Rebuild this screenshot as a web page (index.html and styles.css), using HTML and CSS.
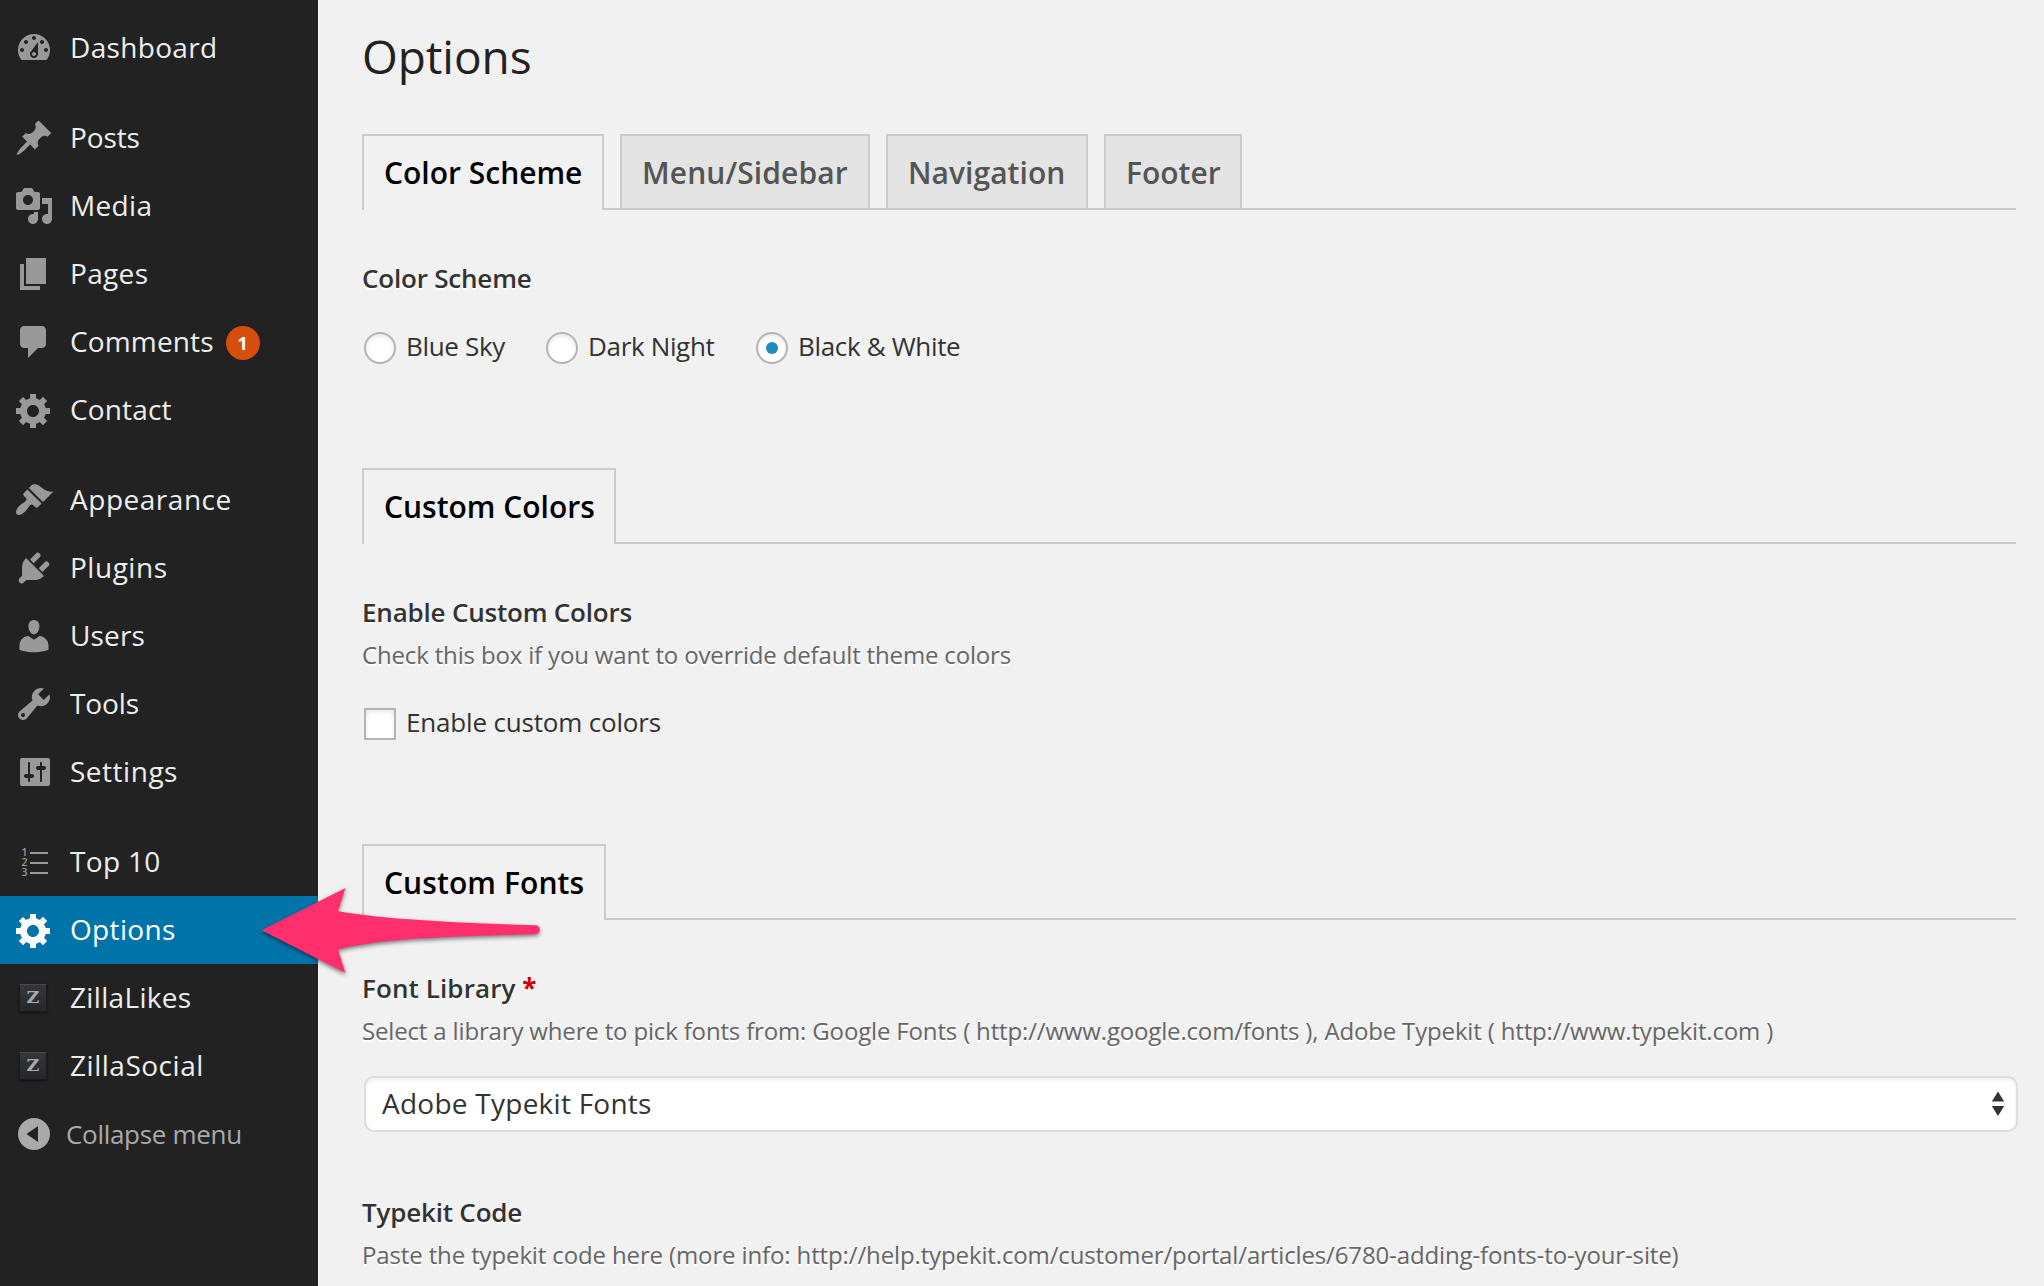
FILE: index.html
```
<!DOCTYPE html>
<html lang="en">
<head>
<meta charset="utf-8">
<title>Options</title>
<link rel="stylesheet" href="styles.css">
</head>
<body>
<div class="admin">
  <nav class="menu">
    <a class="item"><svg class="icon" viewBox="0 0 20 20"><path d="M3.76 16h12.48c1.1-1.37 1.76-3.11 1.76-5 0-4.42-3.58-8-8-8s-8 3.58-8 8c0 1.89.66 3.63 1.76 5zM10 4c.55 0 1 .45 1 1s-.45 1-1 1-1-.45-1-1 .45-1 1-1zM6 6c.55 0 1 .45 1 1s-.45 1-1 1-1-.45-1-1 .45-1 1-1zm8 0c.55 0 1 .45 1 1s-.45 1-1 1-1-.45-1-1 .45-1 1-1zm-5.37 5.55L12 7v6c0 1.1-.9 2-2 2s-2-.9-2-2c0-.57.24-1.08.63-1.45zM4 10c.55 0 1 .45 1 1s-.45 1-1 1-1-.45-1-1 .45-1 1-1zm12 0c.55 0 1 .45 1 1s-.45 1-1 1-1-.45-1-1 .45-1 1-1zm-5 3c0-.55-.45-1-1-1s-1 .45-1 1 .45 1 1 1 1-.45 1-1z"/></svg><span class="name">Dashboard</span></a>
    <div class="separator"></div>
    <a class="item tight"><svg class="icon" viewBox="0 0 20 20"><path d="M10.44 3.02l1.82-1.82 6.36 6.35-1.83 1.82c-1.05-.68-2.48-.57-3.41.36l-.75.75c-.92.93-1.04 2.35-.35 3.41l-1.83 1.82-2.41-2.41-2.8 2.79c-.42.42-3.38 2.71-3.8 2.29s1.86-3.39 2.28-3.81l2.79-2.79L4.1 9.36l1.83-1.82c1.05.69 2.48.57 3.4-.36l.75-.75c.93-.92 1.05-2.35.36-3.41z"/></svg><span class="name">Posts</span></a>
    <a class="item"><svg class="icon" viewBox="0 0 20 20"><path d="M13 11V4c0-.55-.45-1-1-1h-1.67L9 1H5L3.67 3H2c-.55 0-1 .45-1 1v7c0 .55.45 1 1 1h10c.55 0 1-.45 1-1zM7 4.5c1.38 0 2.5 1.12 2.5 2.5S8.38 9.5 7 9.5 4.5 8.38 4.5 7 5.62 4.5 7 4.5zM14 6h5v10.5c0 1.38-1.12 2.5-2.5 2.5S14 17.88 14 16.5s1.12-2.5 2.5-2.5c.17 0 .34.02.5.05V9h-3V6zm-4 8.05V13h2v3.5c0 1.38-1.12 2.5-2.5 2.5S7 17.88 7 16.5 8.12 14 9.5 14c.17 0 .34.02.5.05z"/></svg><span class="name">Media</span></a>
    <a class="item"><svg class="icon" viewBox="0 0 20 20"><path d="M6 15V2h10v13H6zm-1 1h8v2H3V5h2v11z"/></svg><span class="name">Pages</span></a>
    <a class="item snug"><svg class="icon" viewBox="0 0 20 20"><path d="M5 2h9c1.1 0 2 .9 2 2v7c0 1.1-.9 2-2 2h-2l-5 5v-5H5c-1.1 0-2-.9-2-2V4c0-1.1.9-2 2-2z"/></svg><span class="name">Comments</span><span class="count">1</span></a>
    <a class="item snug"><svg class="icon" viewBox="0 0 20 20"><path id="gear" d="M18 12h-2.18c-.17.7-.44 1.35-.81 1.93l1.54 1.54-2.1 2.1-1.54-1.54c-.58.36-1.23.63-1.91.79V19H8v-2.18c-.68-.16-1.33-.43-1.91-.79l-1.54 1.54-2.12-2.12 1.54-1.54c-.36-.58-.63-1.23-.79-1.91H1V9.03h2.17c.16-.7.44-1.35.8-1.94L2.43 5.55l2.1-2.1 1.54 1.54c.58-.37 1.24-.64 1.93-.81V2h3v2.18c.68.16 1.33.43 1.91.79l1.54-1.54 2.12 2.12-1.54 1.54c.36.59.64 1.24.8 1.94H18V12zm-8.5 1.5c1.66 0 3-1.34 3-3s-1.34-3-3-3-3 1.34-3 3 1.34 3 3 3z"/></svg><span class="name">Contact</span></a>
    <div class="separator"></div>
    <a class="item wide"><svg class="icon" viewBox="0 0 20 20"><path d="M14.48 11.06L7.41 3.99l1.5-1.5c.5-.56 2.3-.47 3.51.32 1.21.8 1.43 1.28 2.91 2.1 1.18.64 2.45 1.26 4.45.85zm-.71.71L6.7 4.7 4.93 6.47c-.39.39-.39 1.02 0 1.41l1.06 1.06c.39.39.39 1.03 0 1.42-.6.6-1.43 1.11-2.21 1.69-.35.26-.7.53-1.01.84C1.43 14.23.4 16.08 1.4 17.07c.99 1 2.84-.03 4.18-1.36.31-.31.58-.66.85-1.02.57-.78 1.08-1.61 1.69-2.21.39-.39 1.02-.39 1.41 0l1.06 1.06c.39.39 1.02.39 1.41 0z"/></svg><span class="name">Appearance</span></a>
    <a class="item wide"><svg class="icon" viewBox="0 0 20 20"><path d="M13.11 4.36L9.87 7.6 8 5.73l3.24-3.24c.35-.34 1.05-.2 1.56.32.52.51.66 1.21.31 1.55zm-8 1.77l.91-1.12 9.01 9.01-1.19.84c-.71.71-2.63 1.16-3.82 1.16H6.14L4.9 17.26c-.59.59-1.54.59-2.12 0-.59-.58-.59-1.53 0-2.12l1.24-1.24v-3.88c0-1.13.4-3.19 1.09-3.89zm7.26 3.97l3.24-3.24c.34-.35 1.04-.21 1.55.31.52.51.66 1.21.31 1.55l-3.24 3.25z"/></svg><span class="name">Plugins</span></a>
    <a class="item snug"><svg class="icon" viewBox="0 0 20 20"><path d="M10 9.25c-2.27 0-2.73-3.44-2.73-3.44C7 4.02 7.82 2 9.97 2c2.16 0 2.98 2.02 2.71 3.81 0 0-.41 3.44-2.68 3.44zm0 2.57L12.72 10c2.39 0 4.52 2.33 4.52 4.53v2.49s-3.65 1.13-7.24 1.13c-3.65 0-7.24-1.13-7.24-1.13v-2.49c0-2.25 1.94-4.48 4.47-4.48z"/></svg><span class="name">Users</span></a>
    <a class="item tight"><svg class="icon" viewBox="0 0 20 20"><path d="M16.68 9.77c-1.34 1.34-3.3 1.67-4.95.99l-5.41 6.52c-.99.99-2.59.99-3.58 0s-.99-2.59 0-3.57l6.52-5.42c-.68-1.65-.35-3.61.99-4.95 1.28-1.28 3.12-1.62 4.72-1.06l-2.89 2.89 2.82 2.82 2.86-2.87c.53 1.58.18 3.39-1.08 4.65zM3.81 16.21c.4.39 1.04.39 1.43 0 .4-.4.4-1.04 0-1.43-.39-.4-1.03-.4-1.43 0-.39.39-.39 1.03 0 1.43z"/></svg><span class="name">Tools</span></a>
    <a class="item wide"><svg class="icon" viewBox="0 0 20 20"><path d="M18 16V4c0-.55-.45-1-1-1H4c-.55 0-1 .45-1 1v12c0 .55.45 1 1 1h13c.55 0 1-.45 1-1zM8 11h1c.55 0 1 .45 1 1s-.45 1-1 1H8v1.5c0 .28-.22.5-.5.5s-.5-.22-.5-.5V13H6c-.55 0-1-.45-1-1s.45-1 1-1h1V5.5c0-.28.22-.5.5-.5s.5.22.5.5V11zm5-2h-1c-.55 0-1-.45-1-1s.45-1 1-1h1V5.500c0-.28.22-.5.5-.5s.5.22.5.5V7h1c.55 0 1 .45 1 1s-.45 1-1 1h-1v5.500c0 .28-.22.5-.5.5s-.5-.22-.5-.5V9z"/></svg><span class="name">Settings</span></a>
    <div class="separator"></div>
    <a class="item"><svg class="icon" viewBox="0 0 40 40"><path d="M16 10h18v2H16zM16 20h18v2H16zM16 30h18v2H16z"/><text class="digit" x="7.500" y="14">1</text><text class="digit" x="7.500" y="24">2</text><text class="digit" x="7.500" y="34">3</text></svg><span class="name">Top 10</span></a>
    <a class="item current"><svg class="icon" viewBox="0 0 20 20"><use href="#gear"/></svg><span class="name">Options</span></a>
    <a class="item"><span class="zilla">Z</span><span class="name">ZillaLikes</span></a>
    <a class="item wide"><span class="zilla">Z</span><span class="name">ZillaSocial</span></a>
    <a class="item collapse"><svg class="icon" viewBox="0 0 40 40"><path fill-rule="evenodd" d="M20 4a16 16 0 1 0 0 32 16 16 0 0 0 0-32zM24 12v16L12.500 20z"/></svg><span class="name">Collapse menu</span></a>
  </nav>

  <main class="content">
    <h1 class="title">Options</h1>

    <section class="group">
      <div class="tabs"><a class="tab active scheme">Color Scheme</a><a class="tab sidebar">Menu/Sidebar</a><a class="tab navigation">Navigation</a><a class="tab footer">Footer</a></div>
      <h4 class="label">Color Scheme</h4>
      <div class="radios">
        <label class="choice blue"><span class="radio"></span><span class="text">Blue Sky</span></label>
        <label class="choice dark"><span class="radio"></span><span class="text">Dark Night</span></label>
        <label class="choice"><span class="radio on"></span><span class="text">Black &amp; White</span></label>
      </div>
    </section>

    <section class="group colors">
      <div class="tabs"><a class="tab active custom-colors">Custom Colors</a></div>
      <h4 class="label">Enable Custom Colors</h4>
      <p class="desc">Check this box if you want to override default theme colors</p>
      <label class="choice enable"><span class="checkbox"></span><span class="text">Enable custom colors</span></label>
    </section>

    <section class="group">
      <div class="tabs"><a class="tab active custom-fonts">Custom Fonts</a></div>
      <h4 class="label library">Font Library <span class="required">*</span></h4>
      <p class="desc">Select a library where to pick fonts from: Google Fonts ( http://www.google.com/fonts ), Adobe Typekit ( http://www.typekit.com )</p>
      <div class="select"><span class="value">Adobe Typekit Fonts</span><svg class="arrows" width="14" height="26" viewBox="0 0 14 26"><path d="M7 .5l6.200 10H.8zM7 25L.8 15h12.400z"/></svg></div>
      <h4 class="label typekit">Typekit Code</h4>
      <p class="desc code">Paste the typekit code here (more info: http://help.typekit.com/customer/portal/articles/6780-adding-fonts-to-your-site)</p>
    </section>
  </main>

  <svg class="pointer" width="300" height="110" viewBox="250 875 300 110"><path d="M261.500 930.300L345.500 888 338 911.300C390 920 460 923 535.500 925.300A4.300 4.300 0 0 1 535.500 933.900C460 937 390 937 338 949.500L345.500 973z"/></svg>
</div>
</body>
</html>
```

FILE: styles.css
```
* { box-sizing: border-box; }

body {
  margin: 0;
  background: #f1f1f1;
  color: #333;
  font-family: "Open Sans", "Liberation Sans", sans-serif;
}

.admin {
  position: relative;
  display: flex;
  width: 2044px;
  height: 1286px;
  overflow: hidden;
}

/* Sidebar */
.menu {
  flex: none;
  width: 318px;
  padding-top: 14px;
  background: #222;
}

.item {
  display: flex;
  align-items: center;
  height: 68px;
  padding-left: 14px;
  color: #eee;
  font-size: 28px;
  letter-spacing: .33px;
}

.item.tight { letter-spacing: -.1px; }
.item.snug { letter-spacing: .15px; }
.item.wide { letter-spacing: .52px; }

.icon {
  flex: none;
  width: 40px;
  height: 40px;
  fill: #999;
}

.digit { font-size: 10.5px; font-weight: 600; letter-spacing: 0; }

.name {
  margin: -3px 0 0 16px;
  white-space: nowrap;
}

.separator { height: 22px; }

.count {
  width: 34px;
  height: 34px;
  margin: 2px 0 0 12px;
  border-radius: 17px;
  background: #d54e0e;
  color: #fff;
  font-size: 18px;
  font-weight: 700;
  line-height: 34px;
  text-align: center;
}

.current { background: #0074a8; color: #fff; }
.current .icon { fill: #fff; }

.zilla {
  width: 28px;
  height: 28px;
  margin: -1px 7px 0 5px;
  border: 1px solid #1a1b1d;
  border-top-color: #44484c;
  background: linear-gradient(#33373b, #25282b);
  box-shadow: 0 1px 2px #111;
  color: #aaa;
  font: 700 17.5px/25px "DejaVu Serif", serif;
  letter-spacing: 0;
  text-align: center;
}

.collapse { color: #aaa; font-size: 26px; letter-spacing: -.3px; }
.collapse .icon { fill: #aaa; }
.collapse .name { margin-left: 12px; margin-top: 0; }

/* Options page */
.content {
  flex: 1;
  min-width: 0;
  padding: 24px 28px 0 44px;
}

.title {
  height: 64px;
  margin: 0 0 46px;
  color: #222;
  font-size: 46px;
  font-weight: 400;
  line-height: 64px;
}

.group { height: 334px; }
.colors { height: 376px; }

.tabs {
  display: flex;
  gap: 16px;
  height: 76px;
  border-bottom: 2px solid #ccc;
}

.tab {
  flex: none;
  height: 74px;
  padding-left: 20px;
  border: 2px solid #ccc;
  border-bottom: 0;
  background: #e4e4e4;
  color: #555;
  font-size: 30px;
  font-weight: 600;
  line-height: 73px;
  white-space: nowrap;
}

.tab.active {
  height: 76px;
  background: #f1f1f1;
  color: #000;
}

.scheme { width: 242px; }
.sidebar { width: 250px; letter-spacing: .1px; }
.navigation { width: 202px; letter-spacing: .05px; }
.footer { width: 138px; }
.custom-colors { width: 254px; }
.custom-fonts { width: 244px; letter-spacing: .1px; }

.label {
  height: 36px;
  margin: 50px 0 0;
  font-size: 26px;
  font-weight: 600;
  letter-spacing: -.2px;
  line-height: 36px;
  text-shadow: 0 2px 0 #fff;
}

.label.library { letter-spacing: .1px; }
.required { color: #c00; font-weight: 700; }

.desc {
  height: 40px;
  margin: 5px 0 0;
  color: #666;
  font-size: 24px;
  letter-spacing: -.16px;
  line-height: 40px;
  text-shadow: 0 2px 0 #fff;
  white-space: nowrap;
}

.desc.code { letter-spacing: -.13px; }

.radios {
  display: flex;
  margin-top: 36px;
}

.choice {
  display: flex;
  height: 32px;
  padding-left: 2px;
  font-size: 26px;
  letter-spacing: -.34px;
  line-height: 32px;
  white-space: nowrap;
}

.choice.blue, .choice.dark { flex: none; }
.choice.blue { width: 182px; }
.choice.dark { width: 210px; }
.enable { margin-top: 33px; letter-spacing: -.18px; }

.text { margin: -2px 0 0 10px; }

.radio, .checkbox {
  display: flex;
  align-items: center;
  justify-content: center;
  width: 32px;
  height: 32px;
  border: 2px solid #b4b4b4;
  background: #fff;
  box-shadow: inset 0 2px 4px rgba(0, 0, 0, .1);
}

.radio { border-radius: 50%; }

.radio.on::before {
  content: "";
  width: 12px;
  height: 12px;
  border-radius: 50%;
  background: #1e8cbe;
}

.select {
  display: flex;
  align-items: center;
  justify-content: space-between;
  width: 1654px;
  height: 56px;
  margin: 25px 0 0 2px;
  padding: 0 11px 0 16px;
  border: 2px solid #ddd;
  border-radius: 10px;
  background: #fff;
  box-shadow: inset 0 2px 4px rgba(0, 0, 0, .07);
  font-size: 28px;
  letter-spacing: .25px;
}

.value { margin-top: -3px; }
.arrows { fill: #333; }

.typekit { margin-top: 62px; }

/* Callout arrow laid over the page */
.pointer {
  position: absolute;
  left: 250px;
  top: 875px;
  fill: #ff2f6d;
  filter: drop-shadow(0 2px 2px rgba(0, 0, 0, .5));
}
```
